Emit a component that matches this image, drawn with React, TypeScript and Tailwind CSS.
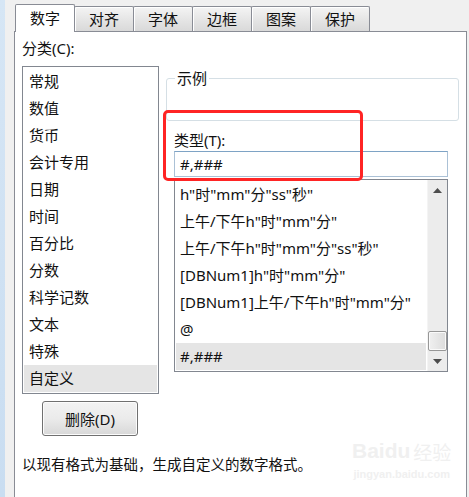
import React from 'react'

const CATEGORIES = ['常规', '数值', '货币', '会计专用', '日期', '时间', '百分比', '分数', '科学记数', '文本', '特殊', '自定义']
const FORMATS = [
  'h"时"mm"分"ss"秒"',
  '上午/下午h"时"mm"分"',
  '上午/下午h"时"mm"分"ss"秒"',
  '[DBNum1]h"时"mm"分"',
  '[DBNum1]上午/下午h"时"mm"分"',
  '@',
  '#,###',
]
const TABS = ['数字', '对齐', '字体', '边框', '图案', '保护']

export default function App() {
  return (
    <div className="relative flex w-[469px] h-[497px] overflow-hidden bg-[#f0f0f0] text-[15px] text-[#111] font-['Noto_Sans','Noto_Sans_CJK_SC',sans-serif]">
      {/* window edge */}
      <div className="w-[5px] bg-gradient-to-b from-[#d6e6f5] to-[#c9ddf1]" />

      <div className="flex flex-col flex-1 pl-[9px] pr-[2px]">
        {/* Tabs */}
        <div className="flex items-end h-[31px] pl-[1px]">
          {TABS.map((t, i) =>
            i === 0 ? (
              <div
                key={t}
                className="relative z-10 mb-[-1px] flex items-center justify-center w-[60px] h-[28px] pb-[2px] bg-white border border-b-0 border-[#898c95] rounded-t-[2px] leading-[20px]"
              >
                {t}
              </div>
            ) : (
              <div
                key={t}
                className="flex items-center justify-center w-[60px] h-[25px] ml-[-1px] bg-gradient-to-b from-[#f4f4f4] via-[#e6e6e6] to-[#d9d9d9] border border-b-0 border-[#898c95] rounded-t-[2px] shadow-[inset_1px_1px_0_#fff] leading-[20px]"
              >
                {t}
              </div>
            ),
          )}
        </div>

        {/* Panel */}
        <div className="flex flex-col flex-1 bg-white border-l border-t border-r border-[#898c95] pl-[7px]">
          <div className="flex">
            {/* Left column */}
            <div className="flex flex-col w-[137px] pt-[6px]">
              <div className="h-[20px] leading-[20px]">分类(C):</div>
              <div className="mt-[8px] h-[328px] border border-[#828790] p-[1px]">
                {CATEGORIES.map((c, i) => (
                  <div
                    key={c}
                    className={`h-[27px] leading-[27px] pl-[5px] ${i === CATEGORIES.length - 1 ? 'bg-[#e5e5e5]' : ''}`}
                  >
                    {c}
                  </div>
                ))}
              </div>
              <button className="mt-[7px] ml-[20px] w-[96px] h-[35px] rounded-[3px] border border-[#707070] bg-gradient-to-b from-[#f3f3f3] via-[#ebebeb] to-[#d8d8d8] shadow-[inset_0_0_0_1px_#fcfcfc] leading-[20px] text-[15px]">
                删除(D)
              </button>
            </div>

            {/* Right column */}
            <div className="flex flex-col ml-[7px] w-[293px] pt-[36px]">
              <fieldset className="h-[53px] border border-[#d5dfe5] rounded-[3px]">
                <legend className="ml-[8px] px-[2px] leading-[20px]">示例</legend>
              </fieldset>
              <div className="ml-[8px] mt-[9px] h-[20px] leading-[20px]">类型(T):</div>
              <div className="ml-[8px] mt-[1px] w-[274px] h-[26px] border border-[#abc1d6] border-t-[#7ea3c5] pl-[5px] leading-[24px]">
                #,###
              </div>
              <div className="ml-[8px] mt-[2px] w-[274px] h-[193px] flex border border-[#828790]">
                <div className="flex-1 p-[1px]">
                  {FORMATS.map((f, i) => (
                    <div
                      key={f}
                      className={`h-[27px] leading-[27px] pl-[4px] whitespace-nowrap ${i === FORMATS.length - 1 ? 'bg-[#e5e5e5]' : ''}`}
                    >
                      {f}
                    </div>
                  ))}
                </div>
                {/* Scrollbar */}
                <div className="flex flex-col w-[20px] bg-[#ececec] border-l border-[#f4f4f4]">
                  <div className="h-[20px] flex items-center justify-center">
                    <svg width="9" height="5" viewBox="0 0 9 5">
                      <path d="M0 5 L4.5 0 L9 5 Z" fill="#4d4d4d" />
                    </svg>
                  </div>
                  <div className="flex-1" />
                  <div className="h-[20px] rounded-[2px] border border-[#979797] bg-gradient-to-r from-[#f0f0f0] to-[#dcdcdc] shadow-[inset_0_0_0_1px_#fafafa]" />
                  <div className="h-[20px] flex items-center justify-center">
                    <svg width="9" height="5" viewBox="0 0 9 5">
                      <path d="M0 0 L9 0 L4.5 5 Z" fill="#4d4d4d" />
                    </svg>
                  </div>
                </div>
              </div>
            </div>
          </div>

          <div className="mt-[18px] h-[20px] leading-[20px] text-[14.5px]">
            以现有格式为基础，生成自定义的数字格式。
          </div>
        </div>
      </div>

      {/* highlight annotation */}
      <div className="absolute left-[163px] top-[110px] w-[200px] h-[71px] border-[3px] border-[#ff2424] rounded-[5px]" />

      {/* watermark */}
      <div className="absolute left-[352px] top-[440px] flex flex-col items-center text-[#f0f0f0] leading-none">
        <div className="flex items-end font-['Liberation_Sans',sans-serif] font-bold text-[21px]">
          <span>Bai</span>
          <span>du</span>
          <span className="ml-[3px] text-[19px] font-['Noto_Sans_CJK_SC',sans-serif] font-normal">经验</span>
        </div>
        <div className="mt-[8px] text-[11px] font-['Liberation_Sans',sans-serif] font-bold">jingyan.baidu.com</div>
      </div>
    </div>
  )
}
